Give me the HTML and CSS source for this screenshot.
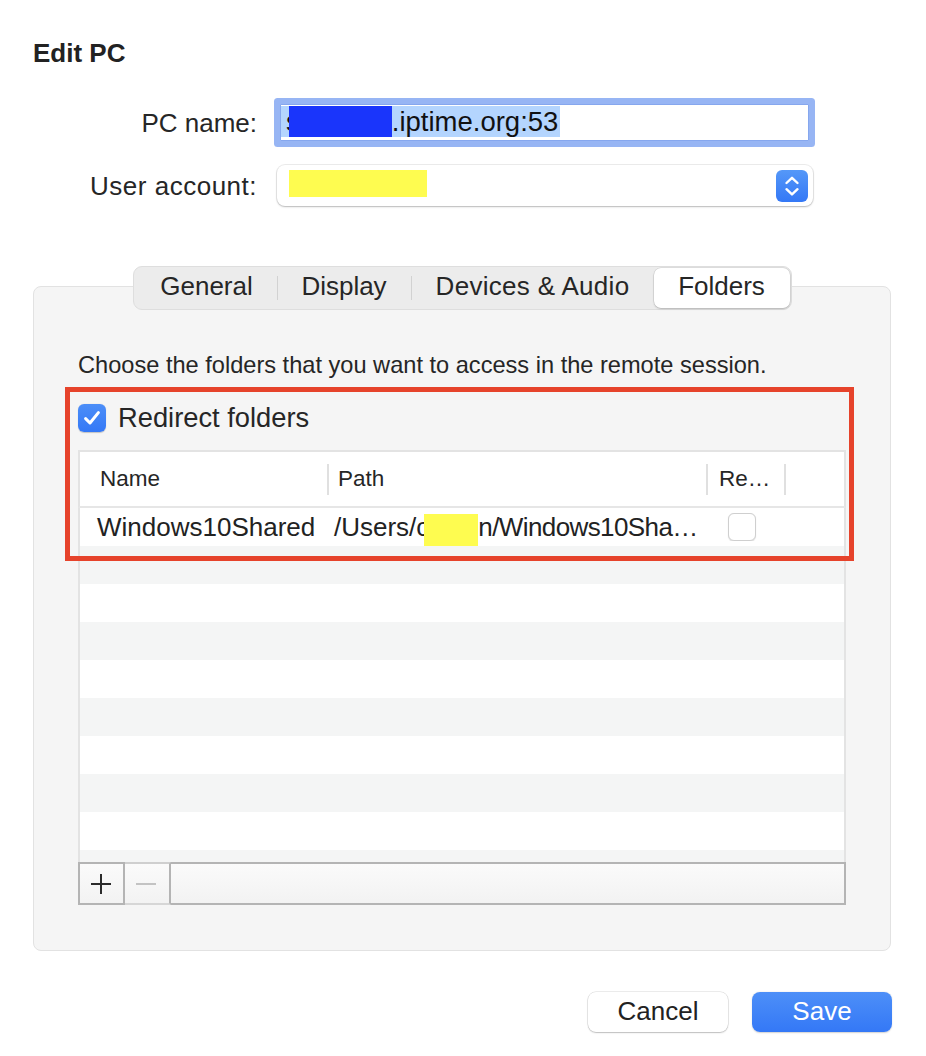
FILE: index.html
```html
<!DOCTYPE html>
<html>
<head>
<meta charset="utf-8">
<title>Edit PC</title>
<link rel="stylesheet" href="styles.css">
</head>
<body>
<div class="dialog">
  <h1 class="title">Edit PC</h1>

  <div class="form">
    <label class="lbl">PC name:</label>
    <div class="input"><span class="sel">s<span class="redact-blue"></span>.iptime.org:53</span></div>
    <label class="lbl wide">User account:</label>
    <div class="popup">
      <span class="redact-yellow"></span>
      <span class="stepper">
        <svg width="32" height="32" viewBox="0 0 32 32"><path d="M10.5 13 L16 7.8 L21.5 13 M10.5 19.2 L16 24.4 L21.5 19.2" fill="none" stroke="#fff" stroke-width="2.4" stroke-linecap="round" stroke-linejoin="round"/></svg>
      </span>
    </div>
  </div>

  <div class="panel">
    <div class="tabs">
      <div class="seg s1">General</div>
      <div class="sep"></div>
      <div class="seg s2">Display</div>
      <div class="sep"></div>
      <div class="seg s3">Devices &amp; Audio</div>
      <div class="seg s4 active">Folders</div>
    </div>

    <p class="hint">Choose the folders that you want to access in the remote session.</p>

    <div class="check-row">
      <span class="cb on"><svg width="28" height="28" viewBox="0 0 28 28"><path d="M7.6 14.6 L12 19 L20.4 8.6" fill="none" stroke="#fff" stroke-width="3" stroke-linecap="round" stroke-linejoin="round"/></svg></span>
      <span class="cb-label">Redirect folders</span>
    </div>

    <div class="table">
      <div class="thead">
        <div class="th c-name">Name</div>
        <div class="vdiv"></div>
        <div class="th c-path">Path</div>
        <div class="vdiv"></div>
        <div class="th c-ro">Re…</div>
        <div class="vdiv"></div>
        <div class="th"></div>
      </div>
      <div class="tbody">
        <div class="row">
          <div class="td t-name">Windows10Shared</div>
          <div class="td t-path"><span>/Users/c</span><span class="redact-yellow small"></span><span class="rest">n/Windows10Sha…</span></div>
          <div class="td t-ro"><span class="cb off"></span></div>
          <div class="td"></div>
        </div>
        <div class="row alt"></div>
        <div class="row"></div>
        <div class="row alt"></div>
        <div class="row"></div>
        <div class="row alt"></div>
        <div class="row"></div>
        <div class="row alt"></div>
        <div class="row"></div>
        <div class="row alt"></div>
      </div>
      <div class="bar">
        <div class="bbtn add"><svg width="22" height="22" viewBox="0 0 22 22"><path d="M11 1 V21 M1 11 H21" stroke="#2b2b2b" stroke-width="2"/></svg></div>
        <div class="bbtn remove"><svg width="22" height="22" viewBox="0 0 22 22"><path d="M1 11 H21" stroke="#c3c3c3" stroke-width="2"/></svg></div>
        <div class="bfill"></div>
      </div>
    </div>

    <div class="annot"></div>
  </div>

  <div class="actions">
    <button class="btn">Cancel</button>
    <button class="btn primary">Save</button>
  </div>
</div>
</body>
</html>
```

FILE: styles.css
```css
* { box-sizing: border-box; }

html, body {
  margin: 0;
  padding: 0;
  background: #ffffff;
}

body {
  font-family: "Liberation Sans", Arial, sans-serif;
  color: #252525;
  width: 926px;
  height: 1056px;
  overflow: hidden;
}

.dialog {
  padding: 38px 35px 0 33px;
  display: flex;
  flex-direction: column;
}

.title {
  margin: 0;
  font-size: 26px;
  line-height: 30px;
  font-weight: bold;
  color: #222;
}

/* form */
.form {
  margin-top: 36px;
  display: grid;
  grid-template-columns: 224px auto;
  grid-template-rows: 37px 41px;
  column-gap: 20px;
  row-gap: 24px;
  align-items: center;
}

.lbl {
  text-align: right;
  font-size: 26px;
  line-height: 30px;
  color: #262626;
  padding-top: 1px;
}

.lbl.wide { letter-spacing: 0.5px; }

.input {
  margin-left: 3px;
  width: 529px;
  height: 37px;
  border: 1px solid #86a7ee;
  border-radius: 1px;
  box-shadow: 0 0 0 6px #97b5f4;
  background: #fff;
  display: flex;
  align-items: flex-start;
  padding: 1px 0 0 0;
}

.sel {
  display: inline-flex;
  align-items: center;
  height: 31px;
  padding: 0 2px 0 5px;
  background: #b4d5fe;
  font-size: 27.5px;
  color: #111;
  white-space: nowrap;
}

.redact-blue {
  display: inline-block;
  width: 103px;
  height: 31px;
  margin-left: -11px;
  background: #1a35fb;
}

.popup {
  width: 536px;
  height: 41px;
  border-radius: 8px;
  background: #fff;
  box-shadow: 0 0 0 1px rgba(0,0,0,0.07), 0 1px 2px rgba(0,0,0,0.22);
  display: flex;
  justify-content: space-between;
  align-items: flex-start;
  padding: 5px 5px 0 12px;
}

.redact-yellow {
  display: inline-block;
  width: 138px;
  height: 27px;
  background: #fefc50;
}

.stepper {
  width: 32px;
  height: 32px;
  border-radius: 6px;
  background: linear-gradient(#5598f8, #3478f6);
  display: flex;
}

/* panel */
.panel {
  position: relative;
  margin-top: 80px;
  width: 858px;
  background: #f5f5f5;
  border: 1px solid #e2e2e2;
  border-radius: 8px;
  padding: 0 44px 45px 44px;
  display: flex;
  flex-direction: column;
}

.tabs {
  align-self: center;
  margin-top: -21px;
  display: flex;
  align-items: center;
  padding: 1px;
  background: #ececec;
  border: 1px solid #dedede;
  border-radius: 9px;
}

.seg {
  height: 40px;
  display: flex;
  align-items: center;
  justify-content: center;
  font-size: 26px;
  padding-bottom: 3px;
  color: #262626;
  white-space: nowrap;
}

.s1 { width: 142px; padding-left: 2px; }
.s2 { width: 133px; }
.s3 { width: 242px; letter-spacing: 0.3px; }
.s4 { width: 136px; }

.sep {
  width: 1px;
  height: 24px;
  background: #d2d2d2;
}

.seg.active {
  background: #fff;
  border-radius: 7px;
  box-shadow: 0 0 0 0.5px rgba(0,0,0,0.12), 0 1px 2px rgba(0,0,0,0.18);
}

.hint {
  margin: 41px 0 0 0;
  font-size: 23.6px;
  line-height: 28px;
  color: #262626;
  white-space: nowrap;
}

.check-row {
  margin-top: 25px;
  display: flex;
  align-items: center;
  gap: 12px;
  height: 28px;
}

.cb {
  width: 28px;
  height: 28px;
  border-radius: 6px;
  display: inline-flex;
  flex: none;
}

.cb.on {
  background: linear-gradient(#4c8ef8, #3478f6);
  box-shadow: 0 0.5px 1px rgba(0,0,0,0.2);
}

.cb.off {
  background: #fff;
  border: 1px solid #cfcfcf;
  box-shadow: 0 0.5px 1px rgba(0,0,0,0.12);
}

.cb-label {
  font-size: 27.3px;
  line-height: 28px;
  color: #262626;
}

/* table */
.table {
  margin-top: 18px;
  display: flex;
  flex-direction: column;
}

.thead {
  display: grid;
  grid-template-columns: 247px 2px 377px 2px 76px 2px 1fr;
  align-items: center;
  height: 58px;
  background: #fff;
  border: 2px solid #e3e3e3;
  border-bottom-color: #e6e6e6;
}

.th {
  font-size: 22.5px;
  color: #262626;
  white-space: nowrap;
  padding-bottom: 1px;
}

.c-name { padding-left: 20px; }
.c-path { padding-left: 9px; }
.c-ro { padding-left: 11px; }

.vdiv {
  width: 2px;
  height: 31px;
  background: #e0e0e0;
}

.tbody {
  height: 354px;
  overflow: hidden;
  border-left: 2px solid #e3e3e3;
  border-right: 2px solid #e3e3e3;
}

.row {
  height: 38px;
  background: #fff;
  display: grid;
  grid-template-columns: 248px 380px 78px 1fr;
  align-items: center;
}

.row.alt { background: #f4f5f5; }

.td {
  font-size: 26px;
  color: #222;
  white-space: nowrap;
  overflow: hidden;
}

.t-name { padding-left: 17px; }

.t-path {
  padding-left: 6px;
  display: flex;
  align-items: center;
  height: 38px;
}

.t-path .rest { letter-spacing: -0.6px; }

.redact-yellow.small {
  width: 54px;
  height: 32px;
  margin-left: -5px;
  margin-top: 5px;
  flex: none;
}

.t-ro {
  padding-left: 20px;
  display: flex;
  align-items: center;
}

.bar {
  height: 43px;
  display: flex;
  border-left: 2px solid #b4b4b4;
  border-right: 2px solid #b4b4b4;
  background: linear-gradient(#fbfbfb, #f2f2f2);
}

.bbtn, .bfill {
  height: 100%;
  border-top: 2px solid #b4b4b4;
  border-bottom: 2px solid #b4b4b4;
}

.bbtn {
  display: flex;
  align-items: center;
  justify-content: center;
  border-right: 2px solid #b4b4b4;
}

.bbtn.add { width: 45px; padding-right: 1px; }
.bbtn.remove {
  width: 46px;
  padding-right: 2px;
  border-top-color: #cfcfcf;
  border-bottom-color: #d6d6d6;
}
.bfill { flex: 1; }

/* annotation overlay */
.annot {
  position: absolute;
  left: 31px;
  top: 100px;
  width: 789px;
  height: 174px;
  border: 5px solid #e6432b;
  pointer-events: none;
}

/* actions */
.actions {
  margin-top: 41px;
  display: flex;
  justify-content: flex-end;
  gap: 24px;
  width: 859px;
}

.btn {
  width: 140px;
  height: 40px;
  border: none;
  border-radius: 8px;
  font-family: "Liberation Sans", Arial, sans-serif;
  font-size: 26px;
  color: #222;
  background: #fff;
  box-shadow: 0 0 0 0.5px rgba(0,0,0,0.15), 0 1px 1.5px rgba(0,0,0,0.2);
  padding: 0 0 1px 0;
}

.btn.primary {
  color: #fff;
  background: linear-gradient(#4d8ff8, #3478f6);
  box-shadow: 0 0.5px 1.5px rgba(0,0,0,0.18);
}
```
